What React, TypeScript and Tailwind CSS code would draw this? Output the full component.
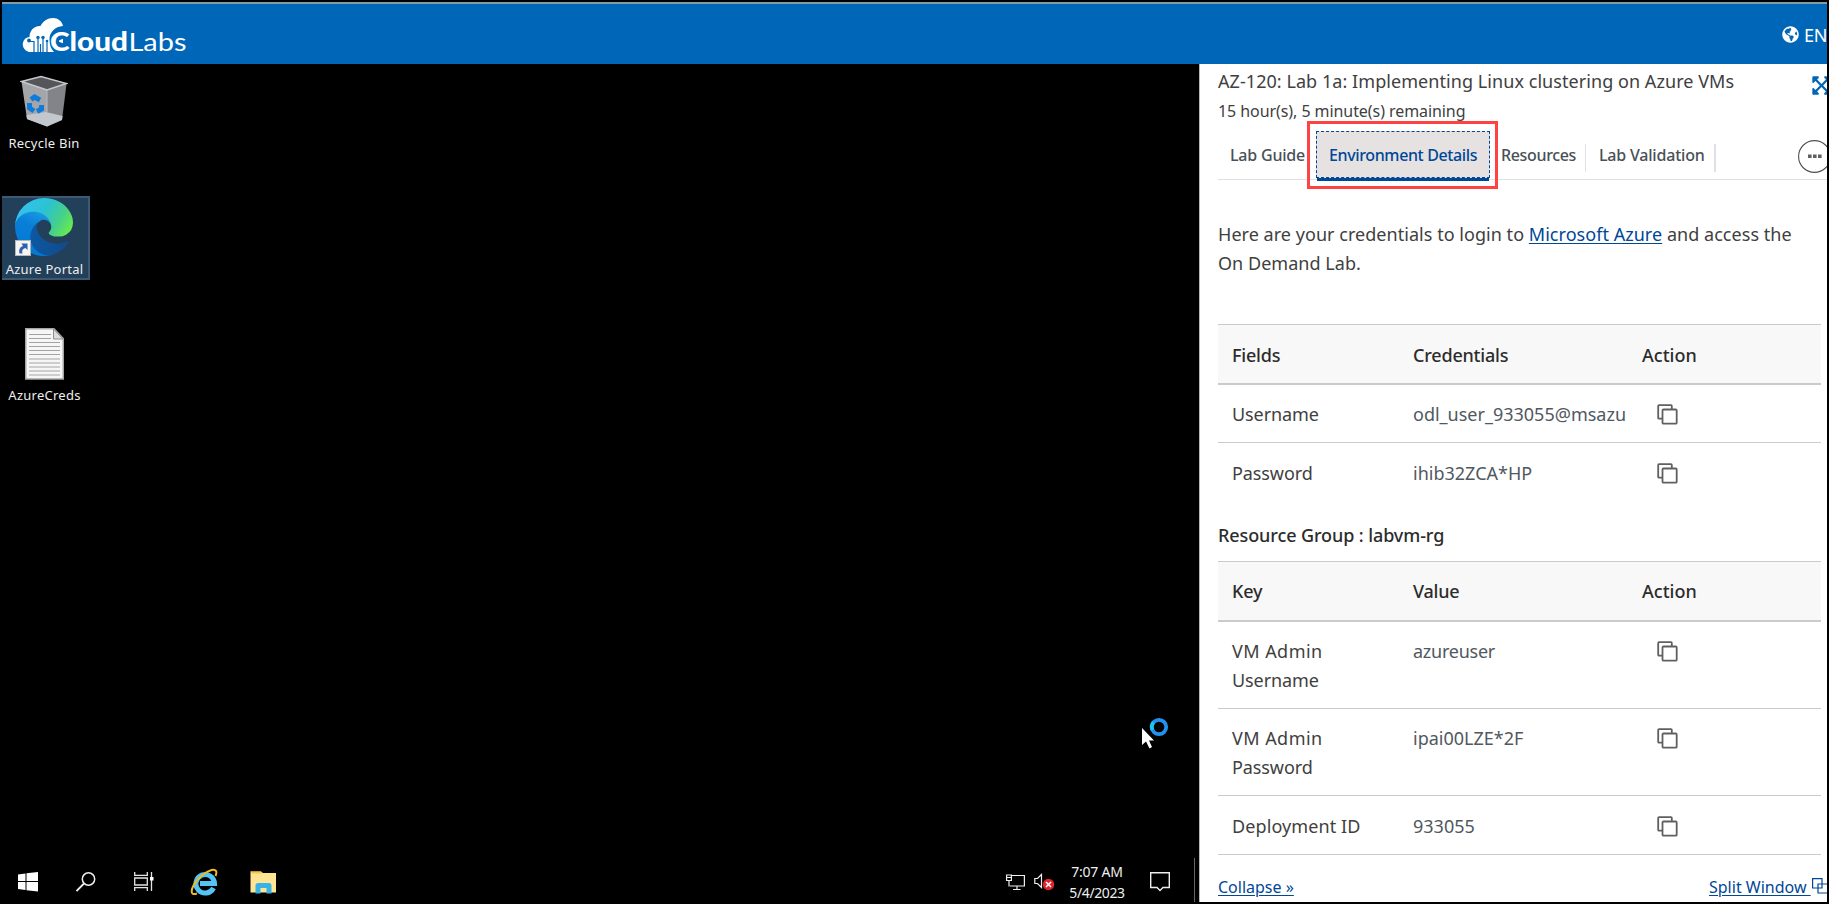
import type { ReactNode } from "react";
import { FaExpandArrowsAlt, FaGlobeAmericas } from "react-icons/fa";

function CloudLabsLogo() {
  return (
    <svg width="172" height="44" viewBox="0 0 172 44" fill="#fff">
      <path d="M9 35C4 33.500 2 29 3 25.500C3.700 22 6.500 20.300 9.500 20C9.500 14 14 8.500 20.500 9C23 4 27.500 1 33 1C38 1 42 4 43 9C35 9.500 29.500 15.500 29.500 22C29.500 28 31 32 34 35Z" />
      <g fill="none" stroke="#0067b8" strokeWidth="1.200">
        <path d="M14 36V24.500H9.500M18 36V22M23 36V22M20.500 36V27M27 36V24" />
      </g>
      <g fill="#0067b8">
        <circle cx="9" cy="23.500" r="1.900" />
        <circle cx="18" cy="20.500" r="1.700" />
        <circle cx="23" cy="20.500" r="1.700" />
        <circle cx="27" cy="24" r="1.300" />
      </g>
      <text x="30" y="33.500" fontFamily="Lato" fontWeight="900" fontSize="26.500" textLength="78" lengthAdjust="spacingAndGlyphs">Cloud</text>
      <text x="108.500" y="33.500" fontFamily="Lato" fontWeight="400" fontSize="25" textLength="58" lengthAdjust="spacingAndGlyphs">Labs</text>
      <path d="M39 23.500L43 21.800V26.200L39 24.800Z" />
    </svg>
  );
}

function RecycleBinIcon() {
  return (
    <svg width="48" height="54" viewBox="0 0 48 54">
      <path d="M1.500 6.500L27 15V51.500L7 44Z" fill="#a3a5a9" />
      <path d="M46.500 9L27 15V51.500L42 45Z" fill="#828489" />
      <path d="M6.500 40L26 37L42.500 41L42 45L27 51.500L7 44Z" fill="#c3c8ce" />
      <path d="M1.500 6.500L21 1.500L46.500 8.500L27 15Z" fill="#55565a" stroke="#c9cacd" strokeWidth="1.500" />
      <path d="M27 15V37" stroke="#b9babd" />
      <g fill="none" stroke="#0f7bd8" strokeWidth="5">
        <path d="M11 24.500L14.500 22L20 25" />
        <path d="M9.500 28L9.500 33L14 36" />
        <path d="M21.500 30L21.500 34L17 36.500" />
      </g>
    </svg>
  );
}

function EdgeIcon() {
  return (
    <svg width="58" height="58" viewBox="0 0 256 256">
      <defs>
        <linearGradient id="edgeA" x1="0" y1="0" x2="1" y2="0">
          <stop offset="0" stopColor="#0c59a4" />
          <stop offset="1" stopColor="#114a8b" />
        </linearGradient>
        <linearGradient id="edgeB" x1="0.600" y1="0" x2="0.200" y2="1">
          <stop offset="0" stopColor="#1b9de2" />
          <stop offset="0.350" stopColor="#0a7fd8" />
          <stop offset="1" stopColor="#0078d4" />
        </linearGradient>
        <linearGradient id="edgeC" x1="0" y1="0.300" x2="1" y2="0.700">
          <stop offset="0" stopColor="#35c1f1" />
          <stop offset="0.450" stopColor="#2bc3d2" />
          <stop offset="0.750" stopColor="#45d08a" />
          <stop offset="1" stopColor="#66eb4e" />
        </linearGradient>
      </defs>
      <path fill="url(#edgeA)" d="M231 190.500c-3.400 1.800-6.900 3.400-10.500 4.700a101.500 101.500 0 0 1-35.900 6.500c-47.300 0-88.500-32.500-88.500-74.300a31.500 31.500 0 0 1 16.400-27.300c-42.800 1.800-53.800 46.400-53.800 72.500 0 74 68.100 81.400 82.800 81.400 7.900 0 19.800-2.300 27-4.600l1.300-.4a128.300 128.300 0 0 0 66.600-52.800 4 4 0 0 0-5.400-5.700z" />
      <path fill="url(#edgeB)" d="M105.700 241.400a79.200 79.200 0 0 1-22.700-21.300 80.700 80.700 0 0 1 29.500-120c3.100-1.500 8.500-4.100 15.600-4a32.400 32.400 0 0 1 25.700 13 31.900 31.900 0 0 1 6.300 18.700c0-.2 24.500-79.600-80-79.600-43.900 0-80 41.700-80 78.200a130.200 130.200 0 0 0 12.100 56 128 128 0 0 0 156.400 67 75.500 75.500 0 0 1-62.800-8z" />
      <path fill="url(#edgeC)" d="M152.300 148.900c-.9 1-3.400 2.500-3.400 5.600 0 2.600 1.700 5.200 4.800 7.300 14.300 10 41.400 8.600 41.500 8.600a59.600 59.600 0 0 0 30.300-8.300 61.400 61.400 0 0 0 30.400-52.900c.3-22.400-8-37.300-11.300-43.900C223.500 23.900 177.700 0 128 0A128 128 0 0 0 0 126.200c.5-36.500 36.800-66 80-66 3.500 0 23.500.3 42 10 16.300 8.600 24.900 19 30.800 29.200 6.200 10.700 7.300 24.100 7.300 29.500s-2.700 13.300-7.800 20z" />
    </svg>
  );
}

function ShortcutArrow() {
  return (
    <svg className="absolute bottom-0 left-0" width="16" height="16" viewBox="0 0 16 16">
      <rect x="0.500" y="0.500" width="15" height="15" fill="#f4f4f4" stroke="#b5b5b5" />
      <path d="M4.500 13.500C3.500 9.500 5 7 8 6L6.500 3.500H12.500V10L10.500 8C7.500 9 6.500 10.500 7.500 13.500Z" fill="#2f5fae" />
    </svg>
  );
}

function TextFileIcon() {
  return (
    <svg width="39" height="52" viewBox="0 0 39 52">
      <path d="M0.750 0.750H29L38.250 10.500V51H0.750Z" fill="#f6f6f6" stroke="#a5a5a5" strokeWidth="1.500" />
      <path d="M28.500 1V11H38Z" fill="#dcdcdc" stroke="#8e8e8e" />
      <path d="M4 6.500H26M4 10.500H26M4 14.500H35M4 18.500H35M4 22.500H35M4 26.500H35M4 31H35M4 35H35M4 39H35M4 43H35M4 47H35" stroke="#a3a3a3" strokeWidth="1.200" />
    </svg>
  );
}

function WindowsIcon() {
  return (
    <svg width="20" height="20" viewBox="0 0 20 20" fill="#fff">
      <path d="M0 2.500L7.500 1.500V9H0ZM8.500 1.300L20 0V9H8.500ZM0 10H7.500V18L0 17ZM8.500 10H20V19.500L8.500 18.200Z" />
    </svg>
  );
}

function SearchIcon() {
  return (
    <svg width="20" height="20" viewBox="0 0 20 20" fill="none" stroke="#eee" strokeWidth="1.500">
      <circle cx="12.500" cy="7" r="6.200" />
      <path d="M8 11.500L0.500 19" strokeWidth="1.800" />
    </svg>
  );
}

function TaskViewIcon() {
  return (
    <svg width="20" height="20" viewBox="0 0 20 20" fill="none" stroke="#e4e4e4" strokeWidth="1.300">
      <path d="M0.700 0V3.300H13.300V0M0.700 19V15.700H13.300V19M0.700 6H13.300V13H0.700ZM17.500 0V19" />
      <rect x="16" y="5" width="3.500" height="3.500" fill="#fff" stroke="none" />
    </svg>
  );
}

function InternetExplorerIcon() {
  return (
    <svg width="28" height="28" viewBox="0 0 28 28" fill="none">
      <path d="M23.500 20A9.300 9.300 0 1 1 24.500 15.500H10" stroke="#53c4f4" strokeWidth="5" />
      <path d="M25.500 8C27.500 3.500 26 0.800 21.500 2C14.500 4 6.500 11 3 18.500C0.500 24 1.500 27.500 7 25.500" stroke="#eebb22" strokeWidth="2" />
    </svg>
  );
}

function FolderIcon() {
  return (
    <svg width="27" height="23" viewBox="0 0 27 23">
      <path d="M0.500 0.500H11L13 2H26V21.500H0.500Z" fill="#ffe493" />
      <path d="M0.500 0.500H11L12 2.500H2Z" fill="#f6c840" />
      <path d="M5.500 22.500V14.500Q5.500 12 8 12H19Q21.500 12 21.500 14.500V22.500H16.500V17H10.500V22.500Z" fill="#37b3ea" />
    </svg>
  );
}

function NetworkIcon() {
  return (
    <svg width="20" height="17" viewBox="0 0 20 17" fill="none" stroke="#eee" strokeWidth="1.200">
      <path d="M6 1.500H18.400V12H4M11 12V15.500M7 15.500H14.500M0.600 1H5.400V6.500H0.600ZM3 6.500V12.500M0.600 3.500H5.400" />
    </svg>
  );
}

function MutedSpeakerIcon() {
  return (
    <svg width="21" height="18" viewBox="0 0 21 18" fill="none" stroke="#eee" strokeWidth="1.200">
      <path d="M0.800 5.500H3.500L7.500 1.500V14.500L3.500 10.500H0.800Z" />
      <circle cx="14.500" cy="11.500" r="5.700" fill="#e02330" stroke="none" />
      <path d="M12 9L17 14M17 9L12 14" stroke="#fff" strokeWidth="1.500" />
    </svg>
  );
}

function NotificationIcon() {
  return (
    <svg width="20" height="20" viewBox="0 0 20 20" fill="none" stroke="#eee" strokeWidth="1.400">
      <path d="M0.700 0.700H19.300V15.500H13L10 18.500L7 15.500H0.700Z" />
    </svg>
  );
}

function BusyCursor() {
  return (
    <svg className="absolute left-[1139px] top-[652px]" width="28" height="34" viewBox="0 0 28 34">
      <path d="M1 12V29L5 25.500L8.500 32.500L11 31L8 24.500H13Z" fill="#fff" />
      <circle cx="18" cy="11" r="7.200" fill="none" stroke="#2490ee" strokeWidth="3.800" />
      <path d="M11.500 14A7.200 7.200 0 0 1 12.500 6.300" fill="none" stroke="#1cc3f4" strokeWidth="3.800" />
    </svg>
  );
}

function CopyIcon() {
  return (
    <svg width="21" height="21" viewBox="0 0 21 21" fill="none" stroke="#606060" strokeWidth="1.800">
      <path d="M5 14.700H2Q1.200 14.700 1.200 13.900V2Q1.200 1.200 2 1.200H14Q14.800 1.200 14.800 2V5" />
      <rect x="5.500" y="5.500" width="14.200" height="14.200" rx="1" />
    </svg>
  );
}

function SplitIcon() {
  return (
    <svg className="shrink-0" width="19" height="16" viewBox="0 0 19 16" fill="none" stroke="#004797" strokeWidth="1.200">
      <path d="M0.600 0.600H10V10H0.600ZM6 6H18V15H6Z" />
    </svg>
  );
}

type Cell = { label: string[]; value: string; row: string };

function CredentialTable({ heads, headPad, rows }: { heads: [string, string, string]; headPad: string; rows: Cell[] }) {
  return (
    <div className="w-[603px] leading-[29px] text-[#404040]">
      <div className={`grid h-[61px] grid-cols-[181px_228px_1fr] border-t border-b-2 border-[#cecaca] bg-[#f8f8f8] pl-[14px] font-medium tracking-[-0.2px] text-[#2c2c2c] ${headPad}`}>
        {heads.map((h) => (
          <span key={h} className={h === "Action" ? "pl-px tracking-normal" : ""}>{h}</span>
        ))}
      </div>
      {rows.map((r) => (
        <div key={r.label.join(" ")} className={`grid grid-cols-[181px_244px_1fr] border-[#cecaca] pl-[14px] ${r.row}`}>
          <div className="flex flex-col">
            {r.label.map((l) => (
              <span key={l} className={l === "VM Admin" ? "tracking-[0.45px]" : l === "Deployment ID" ? "tracking-[0.1px]" : "tracking-[-0.1px]"}>{l}</span>
            ))}
          </div>
          <span className={r.value === "azureuser" ? "tracking-[-0.25px] text-[#505860]" : "text-[#505860]"}>{r.value}</span>
          <span className="pt-[4px]">
            <CopyIcon />
          </span>
        </div>
      ))}
    </div>
  );
}

function DesktopIcon({ label, className, children }: { label: string; className: string; children: ReactNode }) {
  return (
    <div className={`flex w-[88px] flex-col items-center ${className}`}>
      {children}
      <span className="whitespace-nowrap text-[13px] leading-[18px] tracking-[0.25px] text-[#eee]">{label}</span>
    </div>
  );
}

function Desktop() {
  return (
    <div className="relative flex w-[1197px] shrink-0 flex-col bg-black">
      <DesktopIcon label="Recycle Bin" className="mt-[11px] h-[84px] gap-[5px] pr-[4px]">
        <RecycleBinIcon />
      </DesktopIcon>
      <DesktopIcon label="Azure Portal" className="mt-[37px] h-[84px] gap-[4px] border-y-2 border-r-2 border-[#3d5a74] bg-[#23405a] pr-[1px]">
        <div className="relative mr-px">
          <EdgeIcon />
          <ShortcutArrow />
        </div>
      </DesktopIcon>
      <DesktopIcon label="AzureCreds" className="mt-[48px] gap-[6px] pr-[3px]">
        <TextFileIcon />
      </DesktopIcon>
      <BusyCursor />
      <div className="mt-auto flex h-[44px] items-center text-white">
        <div className="flex w-[290px] items-center pt-[4px] pl-[16px]">
          <WindowsIcon />
          <span className="ml-[38px]"><SearchIcon /></span>
          <span className="ml-[38px]"><TaskViewIcon /></span>
          <span className="ml-[36px]"><InternetExplorerIcon /></span>
          <span className="ml-[32px]"><FolderIcon /></span>
        </div>
        <div className="ml-auto flex items-center">
          <span className="pt-[4px]"><NetworkIcon /></span>
          <span className="ml-[8px] pt-[4px]"><MutedSpeakerIcon /></span>
          <div className="ml-[8px] flex w-[68px] flex-col items-center pt-[3px] text-[14px] leading-[21px] text-[#eee]">
            <span className="tracking-[-0.2px]">7:07 AM</span>
            <span className="tracking-[-0.4px]">5/4/2023</span>
          </div>
          <span className="ml-[19px] pt-[4px]"><NotificationIcon /></span>
          <div className="ml-[24px] h-[44px] w-[5px] border-l border-[#666]" />
        </div>
      </div>
    </div>
  );
}

function Tabs() {
  return (
    <div className="mt-[8px] flex h-[49px] border-b border-[#dee2e6] pl-[12px] text-[16px] font-medium leading-[48px] tracking-[-0.2px] text-[#495057]">
      <span className="w-[76px] shrink-0 whitespace-nowrap">Lab Guide</span>
      <div className="relative ml-[10px] h-[48px] w-[174px] shrink-0">
        <div className="h-[47px] border border-dashed border-[#004797] bg-[#e6e2e2] pl-[12px] leading-[47px] whitespace-nowrap tracking-[-0.37px] text-[#004797]">
          Environment Details
        </div>
        <div className="mx-px h-[3px] bg-[#004797]" />
        <div className="absolute -top-[10px] -left-[9px] h-[68px] w-[191px] border-[3px] border-[#ff4343]" />
      </div>
      <span className="ml-[11px] w-[75px] shrink-0 tracking-[-0.35px]">Resources</span>
      <div className="mt-[13px] ml-[9px] h-[28px] w-px shrink-0 bg-[#dee2e6]" />
      <span className="ml-[13px] w-[106px] shrink-0 whitespace-nowrap">Lab Validation</span>
      <div className="mt-[13px] ml-[9px] h-[28px] w-[2px] shrink-0 bg-[#dee2e6]" />
      <svg className="mt-[9px] ml-[82px] shrink-0" width="33" height="33" viewBox="0 0 33 33">
        <circle cx="16.500" cy="16.500" r="15.900" fill="#fff" stroke="#505050" strokeWidth="1.100" />
        <path d="M10 14.500h3.600v3.600h-3.600zM15 14.500h3.600v3.600h-3.600zM20 14.500h3.600v3.600h-3.600z" fill="#606060" />
      </svg>
    </div>
  );
}

function LabPanel() {
  return (
    <div className="flex w-[628px] flex-col overflow-hidden border-l border-[#b8b8b8] bg-white pl-[18px] text-[18px] text-[#404040]">
      <div className="mt-[3px] flex h-[29px]">
        <span className="w-[593px] shrink-0 whitespace-nowrap leading-[29px] tracking-[0.06px]">AZ-120: Lab 1a: Implementing Linux clustering on Azure VMs</span>
        <FaExpandArrowsAlt className="mt-[8px] size-[21px] shrink-0 text-[#0067b8]" />
      </div>
      <span className="mt-[3px] text-[16px] leading-[24px] tracking-[-0.07px]">15 hour(s), 5 minute(s) remaining</span>
      <Tabs />
      <p className="mt-[40px] w-[600px] leading-[29px] tracking-[0.04px]">
        Here are your credentials to login to <a className="text-[#004797] underline underline-offset-2">Microsoft Azure</a> and access the On Demand Lab.
      </p>
      <div className="mt-[46px]">
        <CredentialTable
          heads={["Fields", "Credentials", "Action"]}
          headPad="pt-[16px]"
          rows={[
            { label: ["Username"], value: "odl_user_933055@msazu", row: "h-[58px] border-b pt-[15px]" },
            { label: ["Password"], value: "ihib32ZCA*HP", row: "h-[58px] pt-[16px]" },
          ]}
        />
      </div>
      <h2 className="mt-[20px] mb-[11px] font-medium leading-[29px] tracking-[-0.1px] text-[#2c2c2c]">Resource Group : labvm-rg</h2>
      <CredentialTable
        heads={["Key", "Value", "Action"]}
        headPad="pt-[15px]"
        rows={[
          { label: ["VM Admin", "Username"], value: "azureuser", row: "h-[87px] border-b pt-[15px]" },
          { label: ["VM Admin", "Password"], value: "ipai00LZE*2F", row: "h-[87px] border-b pt-[15px]" },
          { label: ["Deployment ID"], value: "933055", row: "h-[59px] border-b pt-[16px]" },
        ]}
      />
      <div className="mt-[20px] flex w-[630px] items-start text-[16px] leading-[24px] text-[#004797]">
        <a className="underline underline-offset-2">Collapse »</a>
        <a className="ml-auto flex shrink-0 pr-[17px] underline underline-offset-2">
          <span className="w-[103px] whitespace-pre">{"Split Window "}</span>
          <span className="pt-[3px]"><SplitIcon /></span>
        </a>
      </div>
    </div>
  );
}

export default function App() {
  return (
    <div className="h-[904px] w-[1829px] overflow-hidden bg-black p-[2px] font-['Noto_Sans',sans-serif]">
      <div className="flex h-[900px] w-[1825px] flex-col overflow-hidden">
        <header className="flex h-[62px] shrink-0 overflow-hidden border-t-2 border-[#7f9cab] bg-[#0067b8] text-white">
          <span className="pt-[13px] pl-[18px]">
            <CloudLabsLogo />
          </span>
          <div className="ml-auto flex w-[45px] shrink-0">
            <FaGlobeAmericas className="mt-[22px] size-[17px] shrink-0" />
            <span className="ml-[5px] pt-[18px] text-[18px] leading-[27px] tracking-[-0.3px]">EN</span>
          </div>
        </header>
        <div className="flex min-h-0 grow">
          <Desktop />
          <LabPanel />
        </div>
      </div>
    </div>
  );
}
